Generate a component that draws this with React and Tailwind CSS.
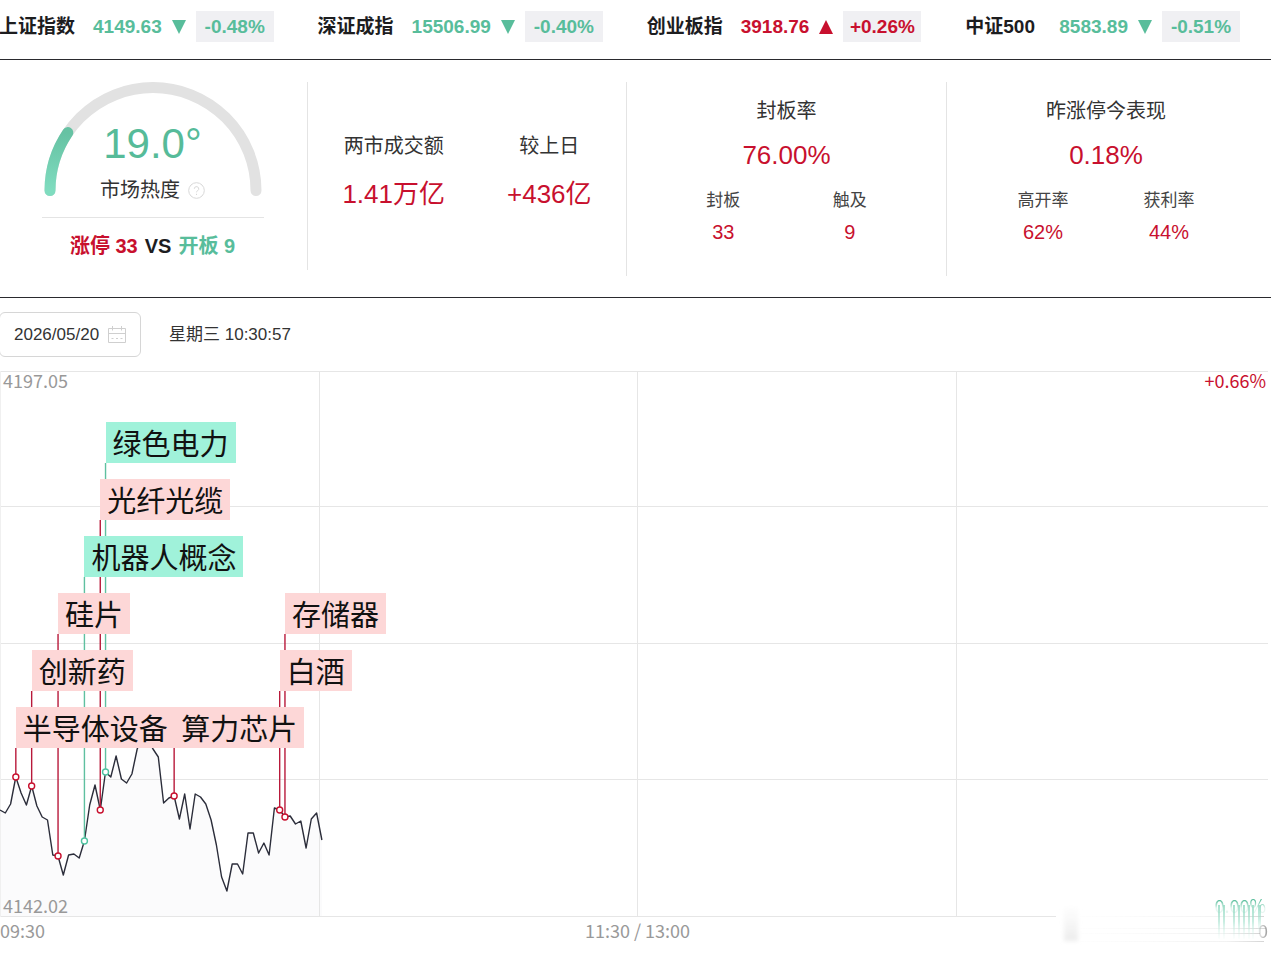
import React, { useState } from 'react';

// --- DATA ---
const indices = [
    { name: '上证指数', value: '4149.63', change: '-0.48%', up: false },
    { name: '深证成指', value: '15506.99', change: '-0.40%', up: false },
    { name: '创业板指', value: '3918.76', change: '+0.26%', up: true },
    { name: '中证500', value: '8583.89', change: '-0.51%', up: false },
];

// One value per minute, as a height inside the plot (0 = top)
const series = [
    439, 442, 433, 406, 422, 434, 415, 435, 446, 449, 484, 485, 504, 484, 483, 487,
    470, 434, 414, 439, 401, 406, 385, 408, 412, 403, 378, 366, 369, 378, 386, 432,
    427, 425, 448, 423, 458, 423, 426, 433, 449, 474, 506, 520, 493, 493, 503, 462,
    462, 482, 472, 484, 437, 439, 446, 445, 453, 450, 477, 448, 442, 469,
];

// row 0 is the highest line of tags
const sectors = [
    { name: '绿色电力', minute: 20, row: 0, up: false },
    { name: '光纤光缆', minute: 19, row: 1, up: true },
    { name: '机器人概念', minute: 16, row: 2, up: false },
    { name: '硅片', minute: 11, row: 3, up: true },
    { name: '存储器', minute: 54, row: 3, up: true },
    { name: '创新药', minute: 6, row: 4, up: true },
    { name: '白酒', minute: 53, row: 4, up: true },
    { name: '半导体设备', minute: 3, row: 5, up: true },
    { name: '算力芯片', minute: 33, row: 5, up: true },
];

const PLOT_WIDTH = 1268;
const PLOT_HEIGHT = 546;
const STEP = 5.277;
const TAG_TOP = 51;
const TAG_PITCH = 57;

const percentX = (minute) => `${((minute * STEP) / PLOT_WIDTH) * 100}%`;

// --- INDEX BAR ---
function IndexItem({ name, value, change, up }) {
    const color = up ? 'text-[#c8102e]' : 'text-[#58bd9b]';
    return (
        <div className="flex items-center text-[19px] leading-[31px] font-bold whitespace-nowrap">
            <span className="min-w-[76px] text-[#1d1d1f]">{name}</span>
            <span className={`ml-[18px] ${color}`}>{value}</span>
            <svg viewBox="0 0 14 14" className={`ml-[10px] h-[14px] w-[14px] ${color}`} fill="currentColor" aria-hidden="true">
                <path d={up ? 'M7 0 L14 14 H0 Z' : 'M0 0 H14 L7 14 Z'} />
            </svg>
            <span className={`ml-[10px] w-[78px] bg-[#f0f0f3] text-center ${color}`}>{change}</span>
        </div>
    );
}

// --- MARKET HEAT ---
function HeatGauge() {
    return (
        <div className="mb-[6px] flex flex-col items-center border-r border-[#e4e4e4] pr-[2px] pb-[10px]">
            <div className="grid justify-items-center">
                <svg viewBox="0 0 218 116" className="col-start-1 row-start-1 h-[116px] w-[218px]" fill="none" strokeWidth="11" strokeLinecap="round" aria-hidden="true">
                    <defs>
                        <linearGradient id="heat" x1="0" y1="1" x2="0" y2="0">
                            <stop offset="0" stopColor="#7fdcbf" />
                            <stop offset="1" stopColor="#66c2a3" />
                        </linearGradient>
                    </defs>
                    <path d="M6 108.5 A103 103 0 0 1 212 108.5" stroke="#e2e2e2" />
                    <path d="M6 108.5 A103 103 0 0 1 23.8 50.6" stroke="url(#heat)" />
                </svg>
                <div className="col-start-1 row-start-1 flex flex-col items-center pt-[38px]">
                    <span className="text-[42px] leading-[48px] text-[#56bb99]">19.0°</span>
                    <span className="mt-2 flex items-center gap-2 text-[20px] leading-[28px] text-[#333]">
                        市场热度
                        <button type="button" aria-label="市场热度说明">
                            <svg viewBox="0 0 17 17" className="h-[17px] w-[17px]" fill="none" stroke="#d8d8d8" aria-hidden="true">
                                <circle cx="8.5" cy="8.5" r="7.8" />
                                <path d="M6.3 6.8 a2.2 2.2 0 1 1 3.3 1.9 q-1.1 .6 -1.1 1.6 M8.5 11.8 v1.2" />
                            </svg>
                        </button>
                    </span>
                </div>
            </div>
            <div className="mt-[13px] w-[222px] border-t border-[#e4e4e4]" />
            <p className="mt-[14px] flex gap-[7px] text-[20px] leading-[28px] font-bold">
                <span className="text-[#c8102e]">涨停 33</span>
                <span className="text-[#1d1d1f]">VS</span>
                <span className="text-[#58bd9b]">开板 9</span>
            </p>
        </div>
    );
}

function Figure({ label, value }) {
    return (
        <div className="flex flex-col items-center">
            <span className="text-[20px] leading-[28px] text-[#333]">{label}</span>
            <span className="mt-4 text-[26px] leading-[36px] text-[#c8102e]">{value}</span>
        </div>
    );
}

function RatePanel({ title, value, parts, last }) {
    return (
        <div className={`flex flex-col items-center px-[33px] pt-[15px] ${last ? '' : 'border-r border-[#e4e4e4]'}`}>
            <span className="text-[20px] leading-[28px] text-[#333]">{title}</span>
            <span className="mt-3 text-[26px] leading-[36px] text-[#c8102e]">{value}</span>
            <div className="mt-4 grid w-full grid-cols-2">
                {parts.map((part) => (
                    <div key={part.label} className="flex flex-col items-center">
                        <span className="text-[17px] leading-[24px] text-[#444]">{part.label}</span>
                        <span className="mt-[5px] text-[20px] leading-[28px] text-[#c8102e]">{part.value}</span>
                    </div>
                ))}
            </div>
        </div>
    );
}

// --- DATE ---
function DateRow() {
    const [date, setDate] = useState('2026/05/20');
    return (
        <div className="flex items-center pt-[14px] text-[17px] leading-[24px] text-[#333]">
            <label className="-ml-px flex h-[45px] w-[142px] items-center rounded-md border border-[#d6d6d6] pr-[14px] pl-[14px]">
                <input
                    type="text"
                    aria-label="日期"
                    value={date}
                    onChange={(e) => setDate(e.target.value)}
                    className="w-full min-w-0 flex-1 outline-none"
                />
                <svg viewBox="0 0 18 18" className="h-[18px] w-[18px] shrink-0" fill="none" stroke="#cfcfcf" aria-hidden="true">
                    <path d="M.5 2.5 h17 v14 h-17 z M.5 7.5 h17 M4.5 0 v4.5 M13.5 0 v4.5" />
                    <path d="M3.5 12.5 h2 M8 12.5 h2 M12.5 12.5 h2" />
                </svg>
            </label>
            <span className="ml-7">星期三 10:30:57</span>
        </div>
    );
}

// --- INTRADAY CHART ---
function Plot() {
    const line = series.map((y, i) => `${(i * STEP).toFixed(1)},${y}`).join(' ');
    const lastX = ((series.length - 1) * STEP).toFixed(1);
    return (
        <svg className="block h-[546px] w-full" aria-hidden="true">
            <svg width="100%" height={PLOT_HEIGHT} viewBox={`0 0 ${PLOT_WIDTH} ${PLOT_HEIGHT}`} preserveAspectRatio="none">
                <polygon points={`0,545 ${line} ${lastX},545`} fill="#fbfbfc" />
                <g stroke="#e6e6e6" shapeRendering="crispEdges">
                    {[0.5, 135.5, 272.5, 408.5].map((y) => (
                        <line key={y} x1="0" x2={PLOT_WIDTH} y1={y} y2={y} />
                    ))}
                    <line x1="0" x2="1056" y1="545.5" y2="545.5" />
                    <line x1=".5" x2=".5" y1="0" y2="546" stroke="#f0f0f0" />
                    {[319.5, 637.5, 956.5].map((x) => (
                        <line key={x} x1={x} x2={x} y1="0" y2="546" />
                    ))}
                </g>
                <polyline points={line} fill="none" stroke="#2b2d3a" strokeWidth="1.4" strokeLinejoin="round" />
            </svg>
            {sectors.map(({ name, minute, row, up }) => (
                <line
                    key={name}
                    x1={percentX(minute)}
                    x2={percentX(minute)}
                    y1={TAG_TOP + row * TAG_PITCH + 41}
                    y2={series[minute]}
                    stroke={up ? '#b8193a' : '#5fc0a0'}
                    strokeWidth="1.4"
                />
            ))}
            {sectors.map(({ name, minute, up }) => (
                <circle
                    key={name}
                    cx={percentX(minute)}
                    cy={series[minute]}
                    r="3"
                    fill="#fff"
                    stroke={up ? '#c8102e' : '#4fc3a1'}
                    strokeWidth="1.4"
                />
            ))}
        </svg>
    );
}

// Faded streaks over the lower right corner of the plot
function Streaks() {
    return (
        <svg viewBox="0 0 216 48" className="absolute right-0 -bottom-7 h-[48px] w-[216px]" aria-hidden="true">
            <defs>
                <linearGradient id="greenFade" x1="0" y1="0" x2="0" y2="1">
                    <stop offset="0" stopColor="#8fd8c0" stopOpacity=".8" />
                    <stop offset=".5" stopColor="#a6e2cf" stopOpacity=".6" />
                    <stop offset="1" stopColor="#dff5ee" stopOpacity=".1" />
                </linearGradient>
                <linearGradient id="greyFade" x1="0" y1="0" x2="0" y2="1">
                    <stop offset="0" stopColor="#f2f2f2" stopOpacity="0" />
                    <stop offset="1" stopColor="#ececec" />
                </linearGradient>
                <linearGradient id="sideFade" x1="0" y1="0" x2="1" y2="0">
                    <stop offset="0" stopColor="#fafafa" stopOpacity=".3" />
                    <stop offset=".8" stopColor="#f2f2f2" />
                    <stop offset="1" stopColor="#d6d6d6" />
                </linearGradient>
                <filter id="soft" x="-30%" y="-20%" width="160%" height="140%">
                    <feGaussianBlur stdDeviation="2" />
                </filter>
                <filter id="faint" x="-5%" y="-20%" width="110%" height="140%">
                    <feGaussianBlur stdDeviation=".5" />
                </filter>
            </defs>
            <rect x="12" y="6" width="14" height="38" fill="url(#greyFade)" filter="url(#soft)" />
            <g fill="url(#sideFade)" filter="url(#faint)">
                <rect x="28" y="19" width="184" height="1" />
                <rect x="28" y="31" width="186" height="1" />
                <rect x="28" y="36" width="180" height="1" />
                <rect x="28" y="44" width="184" height="1" />
            </g>
            <g fill="url(#greenFade)" filter="url(#faint)">
                <rect x="166" y="8" width="2" height="34" />
                <rect x="171" y="8" width="2" height="34" />
                <rect x="181" y="8" width="2" height="34" />
                <rect x="186" y="8" width="2" height="34" />
                <rect x="191" y="8" width="2" height="34" />
                <rect x="196" y="8" width="2" height="34" />
                <rect x="200" y="8" width="2" height="34" />
                <rect x="206" y="8" width="3" height="28" />
            </g>
        </svg>
    );
}

function IntradayChart() {
    return (
        <div className="mt-[14px] mr-[3px] font-['Noto_Sans_CJK_SC',sans-serif]">
            <div className="relative">
                <Plot />
                <div className="absolute top-0 left-[3px] text-[18px] leading-[18px] text-[#999]">4197.05</div>
                <div className="absolute top-0 right-[2px] text-[18px] leading-[18px] text-[#c8102e]">+0.66%</div>
                <div className="absolute bottom-[2px] left-[3px] text-[18px] leading-[20px] text-[#999]">4142.02</div>
                <div className="absolute right-[2px] bottom-[2px] text-[18px] leading-[20px] text-[#58bd9b] [mask-image:linear-gradient(to_bottom,black_25%,rgba(0,0,0,.15)_65%)]">
                    0.00%
                </div>
                <Streaks />
                {sectors.map(({ name, minute, row, up }) => (
                    <div
                        key={name}
                        className={`absolute h-[41px] px-[7px] text-[29px] leading-[41px] whitespace-nowrap text-[#111] ${up ? 'bg-[#fdd7d7]' : 'bg-[#a0f2da]'}`}
                        style={{ left: percentX(minute), top: TAG_TOP + row * TAG_PITCH }}
                    >
                        {name}
                    </div>
                ))}
            </div>
            <div className="grid grid-cols-[1fr_auto_1fr] pt-px text-[18px] leading-[24px] text-[#999]">
                <span>09:30</span>
                <span className="pl-[7px]">11:30 / 13:00</span>
                <span className="text-right [mask-image:linear-gradient(to_right,transparent_98%,black)]">15:00</span>
            </div>
        </div>
    );
}

export default function App() {
    return (
        <main className="min-h-screen overflow-x-hidden bg-white pr-[9px] font-['Liberation_Sans','Noto_Sans_CJK_SC',sans-serif]">
            {/* INDEX BAR */}
            <header className="-ml-px flex justify-between border-b border-[#2a2a2e] pt-[11px] pr-[31px] pb-[17px]">
                {indices.map((item) => (
                    <IndexItem key={item.name} {...item} />
                ))}
            </header>

            {/* MARKET SUMMARY */}
            <section className="grid grid-cols-[308fr_319fr_320fr_318fr] border-b border-[#2a2a2e] pt-[22px] pr-[6px] pb-[21px]">
                <HeatGauge />
                <div className="flex justify-center gap-[62px] border-r border-[#e4e4e4] pt-[50px]">
                    <Figure label="两市成交额" value="1.41万亿" />
                    <Figure label="较上日" value="+436亿" />
                </div>
                <RatePanel
                    title="封板率"
                    value="76.00%"
                    parts={[{ label: '封板', value: '33' }, { label: '触及', value: '9' }]}
                />
                <RatePanel
                    title="昨涨停今表现"
                    value="0.18%"
                    parts={[{ label: '高开率', value: '62%' }, { label: '获利率', value: '44%' }]}
                    last
                />
            </section>

            <DateRow />
            <IntradayChart />
        </main>
    );
}
